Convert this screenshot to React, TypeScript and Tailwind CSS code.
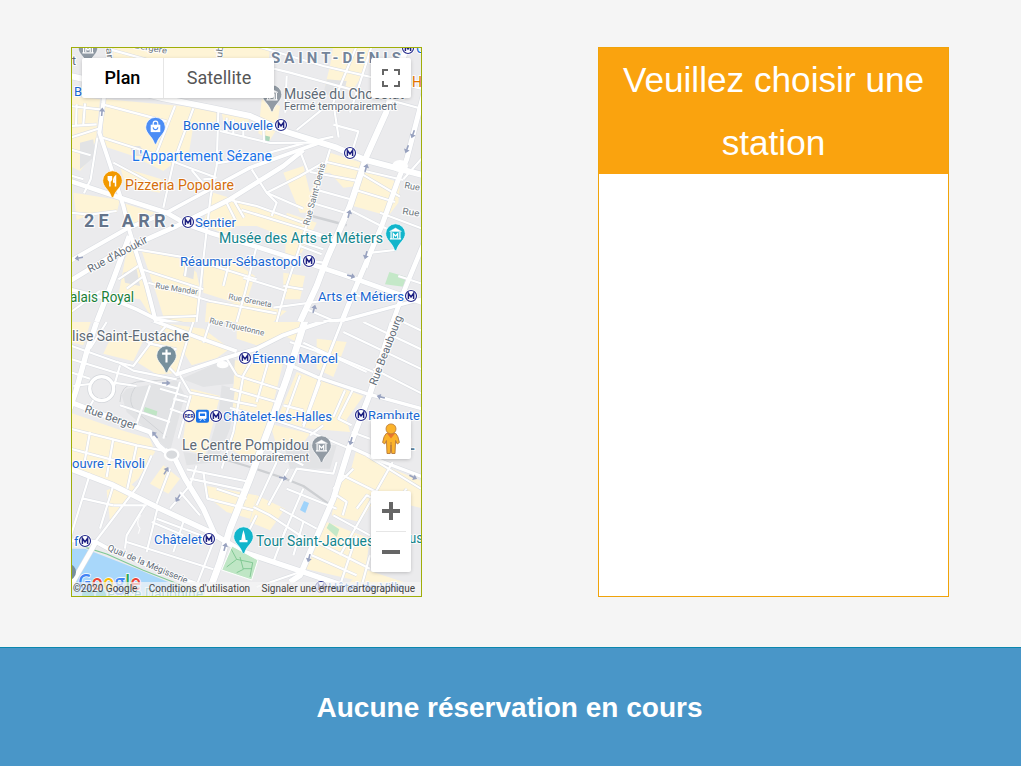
import React from "react";

const BLUE = "#1967d2";
const TEAL = "#12858d";
const GREY = "#5f6b76";

type Tile = {
  id: string;
  y: number;
  cream: string[];
  patches: string[];
  minor: string[];
  main: { d: string; w: number }[];
};

// Each tile is drawn on a grid three times finer than the page.
const tiles: Tile[] = [
  {
    id: "north",
    y: 46,
    cream: [
      "110,160 440,190 440,225 370,240 355,330 312,350 280,375 230,350 190,330 100,300 98,180",
      "0,150 90,160 78,280 50,350 30,375 0,360",
      "130,5 600,5 595,60 130,60",
      "790,0 900,0 875,90 850,130 765,120 780,60",
      "575,160 630,180 620,250 600,282 565,262",
      "10,440 150,462 140,500 60,505 20,522",
      "155,470 255,500 185,540",
      "150,362 275,400 270,440 190,425 165,410",
      "430,440 560,480 640,505 700,540 690,590 560,540 500,540 460,565 400,530",
      "640,380 700,360 720,440 780,320 875,350 862,420 820,425 780,380 755,380 720,500 690,500",
      "868,370 990,410 985,470 955,510 850,480",
      "650,500 740,530 695,620 645,640",
      "190,575 222,680 240,760 250,822 210,760 145,750 165,640",
      "215,615 340,640 380,680 390,730 375,828 285,828 258,740",
      "400,640 480,640 555,690 525,780 400,740",
      "640,680 705,690 690,760 640,760",
      "410,770 520,770 650,795 610,828 405,828",
      "455,200 540,215 530,240 460,225",
    ],
    patches: [
      "30,290 70,280 75,330 30,370",
      "180,300 210,300 230,330 190,330",
      "345,650 375,655 370,700 340,690",
      "160,680 200,670 210,720 165,710",
      "770,100 830,105 820,150 760,145",
    ],
    minor: [
      "M0 180 90 190M0 240 80 235M0 275 85 248M20 175 18 240M45 172 40 235M0 310 62 328M82 275 62 400 42 442M0 388 40 400",
      "M100 176 290 226M98 275 240 320 370 370 440 395M315 180 260 320M370 187 310 350 280 485M445 195 440 360 422 450 400 640 380 828",
      "M130 350 280 430M365 372 405 420M400 400 436 398M440 352 540 336 700 292 790 272M450 255 600 291 740 290M470 215V258M490 220V262M520 225V272M580 235 582 290",
      "M120 10 300 60M440 0 452 50M528 48 660 80 1062 190M560 0 760 60 1062 130M860 0 790 170 806 275M905 0 870 110 840 200M757 190 680 252M790 236 865 256 850 305M650 90 646 200",
      "M690 315 715 380M545 370 590 440 700 488M590 440 690 390 760 350M780 310 740 440 690 600 650 720 620 828",
      "M770 348 1000 402M720 378 870 406M735 430 850 462M730 472 840 505M715 560 790 582",
      "M480 462 560 480 700 530M515 492 640 530 770 570M490 460 522 515M470 470 496 522M590 440 620 470 605 510",
      "M868 380 990 452M850 430 975 468M835 490 950 548M700 590 760 610M690 600 755 625",
      "M0 500 60 506 140 495M200 610 350 635 400 650M352 640 345 690M215 670 400 730M145 700 205 660M170 728 222 690M235 710 420 765 620 802",
      "M560 600 525 740 500 828M400 650 560 700M520 695 650 735M610 785 780 762M0 800 90 735M255 815 380 810M480 640 460 720",
      "M690 640 760 650M890 665 905 620 975 612M930 500 1062 550M1000 400 1062 330M640 720 700 730",
      "M985 690 1062 715M850 745 900 760M710 790 800 828",
    ],
    main: [
      { d: "M118 0 100 170 88 260 128 380 160 480 180 560 230 720 258 828", w: 12 },
      { d: "M0 90 100 112 280 157 420 185 540 210 640 255 800 305 880 340 1062 388", w: 18 },
      { d: "M0 405 150 455 290 500 350 535 420 560 560 602 740 660 860 700 1062 772", w: 14 },
      { d: "M290 500 360 462 540 365 760 286", w: 11 },
      { d: "M0 705 140 620 320 540 480 460 640 360 700 312", w: 14 },
      { d: "M0 645 170 548 290 500", w: 12 },
      { d: "M178 570 130 700 80 828", w: 16 },
      { d: "M1010 0 948 200 890 330 840 480 770 640 740 720 690 828", w: 18 },
      { d: "M1062 140 1010 340 985 400 935 540 880 670 850 740 815 828", w: 15 },
      { d: "M1062 590 1000 740 968 828", w: 14 },
      { d: "M760 828 830 820 1062 757", w: 10 },
      { d: "M0 730 140 765 200 790 260 820 420 850", w: 11 },
    ],
  },
  {
    id: "south",
    y: 322,
    cream: [
      "200,120 262,40 340,70 322,152 262,158",
      "130,30 225,45 190,118 100,95",
      "260,0 400,20 480,80 440,108 365,130 340,90",
      "490,115 640,120 598,292 480,262 492,180",
      "362,200 450,222 405,400 335,380",
      "0,0 62,0 40,70 0,60",
      "0,272 140,320 240,350 255,390 205,470 170,500 90,470 0,425",
      "175,480 200,500 150,560 120,600 110,505",
      "280,430 330,470 295,515 240,485",
      "680,150 880,222 830,292 840,330 720,320 620,295",
      "740,50 830,60 790,165 740,140",
      "500,280 590,300 560,400 530,410 480,380",
      "600,305 720,335 700,362 620,372",
      "400,490 560,520 540,590 470,570 420,530",
      "560,520 645,560 600,625 540,600",
      "860,380 940,430 1062,480 1062,560 900,520 830,490",
      "810,450 930,510 870,600 785,580",
      "770,600 900,650 880,780 705,740 742,660",
      "880,740 1000,780 1000,828 820,800",
      "500,0 700,0 680,60 640,40 560,70 500,50",
    ],
    patches: [
      "335,170 470,110 495,112 490,185 440,190 400,195",
      "455,190 495,200 480,320 440,420 350,430 340,390 410,400 445,280",
      "170,200 320,175 345,220 310,350 300,390 240,330 170,270 155,220",
      "640,360 800,370 780,440 660,440",
    ],
    minor: [
      "M0 70 140 120 190 132 240 65 290 10M140 118 190 146 320 172M0 110 130 150 325 200M240 65 190 35M240 65 320 82M60 80 110 0",
      "M10 192 60 186M130 182 200 192M70 235 50 270M270 108 320 160 350 60 370 0M420 0 400 62M0 150 60 170M150 130 130 200",
      "M330 160 360 212 560 252M330 180 280 350M362 220 325 350M150 250 300 300M240 190 200 305M270 200 355 225M310 230 350 240M300 260 342 275",
      "M560 90 520 160 490 330 455 440M500 160 630 202M480 200 620 240M480 258 600 290M600 100 560 240M470 110 500 160",
      "M690 160 640 300M750 180 700 315M850 200 805 290 845 310M825 205 790 285M640 250 700 265M660 60 790 105 740 90M700 62 890 150",
      "M820 30 1062 145M880 0 1062 86M910 140 1062 218M1000 0 1062 30M790 100 910 150M600 290 720 330 840 380",
      "M0 320 200 370 275 385M0 380 190 430M60 330 40 440M130 350 110 465M200 370 172 500M300 440 260 545M60 455 0 650M130 490 90 620M40 530 130 550",
      "M245 400 205 490 75 660M225 550 170 640 165 680M130 550 230 550M262 560 230 690M330 510 390 580M360 490 300 560M245 600 340 640M170 660 430 742M340 600 310 690M430 660 380 790M260 590 420 650",
      "M350 442 540 480M360 470 525 505M400 450 412 530 550 565M440 500 530 530M380 430 360 490M620 420 560 550M655 440 595 550M630 560 740 620M700 500 640 640",
      "M550 555 600 580 720 660M650 500 800 560M648 620 610 720M560 795 690 750M560 580 530 640M700 600 670 700M545 360 640 400 700 430",
      "M818 460 930 515M800 520 830 540 818 580M790 580 900 640M740 660 900 740M725 700 860 760M968 420 810 700M890 400 1053 500M860 640 810 790M900 700 870 810M1010 500 960 560M850 440 790 500M860 560 890 520 920 535",
      "M660 480 680 440 790 455 800 420M845 330 900 350M720 340 760 310M650 420 600 400",
    ],
    main: [
      { d: "M80 0 50 90 20 200 0 260", w: 16 },
      { d: "M0 240 130 290 240 330 265 370 310 410", w: 15 },
      { d: "M285 385 310 400 345 470 400 560 440 650", w: 16 },
      { d: "M320 157 470 107 560 80 640 40 720 12 780 -8", w: 12 },
      { d: "M710 -20 650 170 600 310 540 470 480 620 450 720 410 828", w: 20 },
      { d: "M815 0 760 140 700 310", w: 8 },
      { d: "M968 0 900 215 840 370 790 530 720 690 690 760 660 780", w: 17 },
      { d: "M240 -8 380 45 500 88", w: 11 },
      { d: "M640 120 740 165 890 215 1062 262", w: 10 },
      { d: "M0 440 130 490 270 560 420 630 520 690 700 750 860 805", w: 16 },
      { d: "M840 375 940 420 1062 466", w: 10 },
      { d: "M0 655 78 660 115 680 250 738 390 790 480 828", w: 12 },
      { d: "M78 660 0 795", w: 14 },
    ],
  },
];

type MapLabel = {
  x: number;
  y: number;
  w: number;
  s: number;
  c: string;
  t: string;
  r?: number;
  b?: boolean;
};

const labels: MapLabel[] = [
  { x: 271, y: 62.5, w: 130, s: 15, c: "#74849a", t: "SAINT-DENIS", b: true },
  { x: 84, y: 227, w: 91, s: 18, c: "#64748b", t: "2E ARR.", b: true },
  { x: 284, y: 99, w: 120, s: 14, c: GREY, t: "Musée du Chocolat" },
  { x: 284, y: 109.5, w: 113, s: 11.2, c: GREY, t: "Fermé temporairement" },
  { x: 183, y: 130, w: 90, s: 13, c: BLUE, t: "Bonne Nouvelle" },
  { x: 132, y: 161, w: 140, s: 14, c: "#1a73e8", t: "L'Appartement Sézane" },
  { x: 125, y: 190, w: 109, s: 14, c: "#d56e0c", t: "Pizzeria Popolare" },
  { x: 195, y: 227, w: 41, s: 13, c: BLUE, t: "Sentier" },
  { x: 219, y: 243, w: 164, s: 14.2, c: TEAL, t: "Musée des Arts et Métiers" },
  { x: 180, y: 266, w: 121, s: 13.2, c: BLUE, t: "Réaumur-Sébastopol" },
  { x: 318, y: 301, w: 86, s: 13.2, c: BLUE, t: "Arts et Métiers" },
  { x: 70, y: 302, w: 64, s: 14, c: "#188038", t: "alais Royal" },
  { x: 72, y: 341, w: 117, s: 14, c: GREY, t: "lise Saint-Eustache" },
  { x: 252, y: 363, w: 86, s: 13, c: BLUE, t: "Étienne Marcel" },
  { x: 223, y: 421, w: 109, s: 13.2, c: BLUE, t: "Châtelet-les-Halles" },
  { x: 368, y: 420, w: 52, s: 13.2, c: BLUE, t: "Rambute" },
  { x: 182, y: 450, w: 127, s: 14, c: GREY, t: "Le Centre Pompidou" },
  { x: 197, y: 461, w: 112, s: 11.2, c: GREY, t: "Fermé temporairement" },
  { x: 72, y: 468, w: 73, s: 13, c: BLUE, t: "ouvre - Rivoli" },
  { x: 154, y: 544, w: 48, s: 13, c: BLUE, t: "Châtelet" },
  { x: 256, y: 546, w: 118, s: 14, c: TEAL, t: "Tour Saint-Jacques" },
  { x: 409, y: 543, w: 14, s: 14, c: TEAL, t: "us" },
  { x: 74, y: 546, w: 4.5, s: 13, c: BLUE, t: "f" },
  { x: 412, y: 87, w: 10, s: 14, c: "#e37400", t: "H" },
  { x: 416, y: 53, w: 9, s: 13, c: BLUE, t: "C" },
  { x: 74, y: 95.5, w: 8, s: 13, c: BLUE, t: "B" },
  { x: 72, y: 65, w: 4, s: 12, c: GREY, t: "t" },
  { x: 328, y: 592, w: 76, s: 13, c: BLUE, t: "Hôtel de Ville" },
  { x: 107, y: 599, w: 96, s: 14, c: "#2b98a5", t: "Place Dauphine" },
  { x: 407, y: 450, w: 22, s: 14, c: "#5e8099", t: "LE", b: true },
  { x: 90, y: 273, w: 66, s: 11, c: GREY, t: "Rue d'Aboukir", r: -28 },
  { x: 84, y: 412, w: 54, s: 11, c: GREY, t: "Rue Berger", r: 19 },
  { x: 376, y: 386, w: 74, s: 11, c: GREY, t: "Rue Beaubourg", r: -69 },
  { x: 309, y: 226, w: 64, s: 9, c: "#707981", t: "Rue Saint-Denis", r: -75 },
  { x: 155, y: 288, w: 43, s: 8, c: "#707981", t: "Rue Mandar", r: 9 },
  { x: 228, y: 299, w: 44, s: 8, c: "#707981", t: "Rue Greneta", r: 11 },
  { x: 209, y: 323, w: 56, s: 8, c: "#707981", t: "Rue Tiquetonne", r: 13 },
  { x: 107, y: 550, w: 86, s: 9, c: GREY, t: "Quai de la Mégisserie", r: 23 },
  { x: 404, y: 188, w: 26, s: 9, c: "#707981", t: "Rue M", r: 10 },
  { x: 402, y: 214, w: 26, s: 9, c: "#707981", t: "Rue R", r: 8 },
  { x: 134, y: 48, w: 33, s: 8.5, c: "#707981", t: "Bergère", r: 10 },
  { x: 106, y: 48, w: 11, s: 9, c: "#707981", t: "ar", r: 84 },
  { x: 222, y: 58, w: 12, s: 9, c: "#707981", t: "ub", r: -84 },
];

const metros = [
  [281, 125],
  [350, 153],
  [188, 222],
  [309, 261],
  [411, 296],
  [245, 358],
  [216, 416],
  [361, 415],
  [209, 539],
  [85, 541],
  [408, 48],
  [321, 587],
];

const arrows = [
  [102, 112, -85], [79, 258, 170], [366, 168, -75], [413, 134, 110], [407, 149, 110],
  [349, 214, -75], [366, 255, 105], [351, 276, 15], [314, 309, -75], [166, 383, 0],
  [155, 435, 230], [381, 397, 195], [351, 441, 105], [166, 471, -60], [178, 498, 120],
  [283, 478, 10], [413, 477, 25], [225, 547, -75], [309, 558, 105],
];

function Metro({ x, y }: { x: number; y: number }) {
  return (
    <g transform={`translate(${x} ${y})`}>
      <circle r="6.8" fill="#fff" />
      <circle r="5.5" fill="#fff" stroke="#262c8c" strokeWidth="1.2" />
      <path d="M-2.6 3V-2.6L0 1 2.6-2.6V3" fill="none" stroke="#1c1f80" strokeWidth="1.5" />
    </g>
  );
}

function Pin({ x, y, color, children }: { x: number; y: number; color: string; children: React.ReactNode }) {
  return (
    <g transform={`translate(${x} ${y})`}>
      <path
        d="M0-10.2A9.8 9.8 0 0 1 9.8-.4C9.8 5.8 3.6 8.4 1.2 15.6Q0 18-1.2 15.6C-3.6 8.4-9.8 5.8-9.8-.4A9.8 9.8 0 0 1 0-10.2Z"
        fill={color}
        stroke="#fff"
        strokeWidth=".7"
      />
      {children}
    </g>
  );
}

function MuseumGlyph() {
  return (
    <g fill="none" stroke="#fff" strokeWidth="1.2">
      <path d="M-6-2.6 0-6 6-2.6Z" fill="#fff" strokeWidth=".4" />
      <path d="M-4.4-2V4.6M4.4-2V4.6M-5.6 4.8H5.6M-2.2 4V-.4L0 2 2.2-.4V4" />
    </g>
  );
}

function StreetTile({ tile }: { tile: Tile }) {
  return (
    <g transform={`translate(70 ${tile.y}) scale(.33333)`}>
      <clipPath id={tile.id}>
        <rect width="1062" height="828.5" />
      </clipPath>
      <g clipPath={`url(#${tile.id})`} fill="none" strokeLinejoin="round">
        {tile.cream.map((p) => (
          <polygon key={p} points={p} fill="#fef4d6" />
        ))}
        {tile.patches.map((p) => (
          <polygon key={p} points={p} fill="#e2e3e5" />
        ))}
        {tile.id === "south" && (
          <>
            <path d="M0 680H45L200 740 330 795 400 828H0Z" fill="#a8d7fa" />
            <path d="M40 674 110 696 220 745 410 820" stroke="#81c995" strokeWidth="3.5" />
            <path d="M225 255 262 268 258 288 219 276Z" fill="#c0e5c5" />
            <path d="M770 618 778 602 808 622 800 645Z" fill="#c4e8c8" />
            <path d="M702 537 717 543 706 573 690 564Z" fill="#9fd3fb" />
            <path d="M150 240Q150 190 200 180L330 170M210 280Q160 240 200 190M200 270 290 345" stroke="#d2d4d7" strokeWidth="3" />
            <path d="M440 405 540 435 640 468 700 492 775 545" stroke="#cdcfd2" strokeWidth="7" />
          </>
        )}
        {tile.id === "north" && (
          <>
            <path d="M958 678 1008 692 1000 722 945 715Z" fill="#c4e8c8" />
            <path d="M582 268 600 272 598 286 582 286Z" fill="#a8d5b8" />
            <path d="M725 510 830 538" stroke="#cfd1d4" strokeWidth="8" />
          </>
        )}
        {tile.minor.map((d) => (
          <path key={d} d={d} stroke="#dadde2" strokeWidth="9.5" />
        ))}
        {tile.id === "south" && <circle cx="95" cy="200" r="36" stroke="#d3d6db" strokeWidth="14" />}
        {tile.main.map((r) => (
          <path key={r.d} d={r.d} stroke="#dadde2" strokeWidth={r.w + 3.5} />
        ))}
        {tile.minor.map((d) => (
          <path key={d} d={d} stroke="#fff" strokeWidth="6.5" />
        ))}
        {tile.main.map((r) => (
          <path key={r.d} d={r.d} stroke="#fff" strokeWidth={r.w} />
        ))}
        {tile.id === "south" && (
          <>
            <circle cx="95" cy="200" r="36" stroke="#fff" strokeWidth="10" />
            <ellipse cx="458" cy="128" rx="18" ry="11" fill="#fff" />
            <ellipse cx="305" cy="398" rx="20" ry="16" fill="#d8dadd" stroke="#fff" strokeWidth="7" />
            <path d="M486 672 564 714 545 774 455 744Z" fill="#bfe6c5" stroke="#fff" strokeWidth="3" />
            <path d="M484 682 500 712 470 735M500 712 548 722 540 765M510 705 520 742 500 752M520 740 545 740" stroke="#78c48c" strokeWidth="2.6" />
            <path d="M212 580Q195 600 210 620L205 635" stroke="#fff" strokeWidth="3" />
          </>
        )}
        {tile.id === "north" && <ellipse cx="990" cy="360" rx="24" ry="18" fill="#fff" />}
      </g>
    </g>
  );
}

function StreetMap() {
  return (
    <svg className="block h-full w-full" viewBox="72 48 349 548" fontFamily="Roboto, sans-serif">
      <rect x="72" y="48" width="349" height="548" fill="#ebebed" />
      {tiles.map((tile) => (
        <StreetTile key={tile.id} tile={tile} />
      ))}
      {arrows.map(([x, y, a]) => (
        <path key={`${x}-${y}`} d="M-4-.8H.5V-3L4.5 0 .5 3V.8H-4Z" fill="#98a2bf" transform={`translate(${x} ${y}) rotate(${a})`} />
      ))}

      <Pin x={88} y={48} color="#8f99a3"><MuseumGlyph /></Pin>
      <Pin x={272} y={95} color="#929ba4"><MuseumGlyph /></Pin>
      <Pin x={155.5} y={127.5} color="#4c8df5">
        <path d="M-4.8-2.8H4.8V4.6H-4.8Z" fill="#fff" />
        <path d="M-2.3-2.5V-4A2.3 2.3 0 0 1 2.3-4V-2.5" fill="none" stroke="#fff" strokeWidth="1.2" />
        <path d="M-2.3-.2A2.3 2.3 0 0 0 2.3-.2" fill="none" stroke="#4c8df5" strokeWidth="1.1" />
      </Pin>
      <Pin x={112.5} y={181} color="#f29900">
        <path d="M-2.6 0V5.5M3 5.5V-4.6Q1 -3 1.2 1H3" fill="none" stroke="#fff" strokeWidth="1.5" />
        <path d="M-4.9-5H-.3V-1.5Q-.8.8-2.6.8-4.4.8-4.9-1.5Z" fill="#fff" />
      </Pin>
      <Pin x={395.5} y={234} color="#12b5cb"><MuseumGlyph /></Pin>
      <Pin x={166.5} y={356} color="#78909c">
        <path d="M0-6.5V6.5M-4.4-2.4H4.4" stroke="#fff" strokeWidth="2.1" />
      </Pin>
      <Pin x={321.5} y={446} color="#929ba4"><MuseumGlyph /></Pin>
      <Pin x={243.5} y={537} color="#12b5cb">
        <path d="M0-7 1.4-2 2.2 3H4V5.2H-4V3H-2.2L-1.4-2Z" fill="#fff" />
      </Pin>
      <circle cx="68" cy="572" r="8" fill="#78909c" />
      <circle cx="88" cy="595" r="6" fill="#30afc0" />
      <circle cx="101" cy="595" r="5" fill="#30afc0" />

      {labels.map((l) => (
        <text
          key={`${l.t}-${l.x}-${l.y}`}
          transform={`translate(${l.x} ${l.y}) rotate(${l.r ?? 0})`}
          fontSize={l.s}
          fontWeight={l.b ? 700 : 400}
          fill={l.c}
          stroke="#fff"
          strokeWidth="2.2"
          strokeOpacity=".9"
          strokeLinejoin="round"
          paintOrder="stroke"
          textLength={l.w}
          lengthAdjust={l.b ? "spacing" : "spacingAndGlyphs"}
        >
          {l.t}
        </text>
      ))}
      {metros.map(([x, y]) => (
        <Metro key={`${x}-${y}`} x={x} y={y} />
      ))}
      <circle cx="189" cy="416" r="5.6" fill="#fff" stroke="#343a96" strokeWidth="1.1" />
      <text x="189" y="418" fontSize="5" fontWeight="700" fill="#262c8c" textAnchor="middle">RER</text>
      <rect x="196" y="409.8" width="13" height="13" rx="2" fill="#1a73e8" />
      <path d="M199 412.3H206V418.3H199ZM200 420.8 201.5 419M205 420.8 203.5 419" fill="#fff" stroke="#fff" />
      <path d="M200 413.5H205V416H200Z" fill="#1a73e8" />

      <text
        x="78"
        y="590"
        fontSize="22"
        fontFamily="'Open Sans', sans-serif"
        fontWeight="600"
        textLength="63"
        lengthAdjust="spacingAndGlyphs"
        stroke="#fff"
        strokeWidth="1.5"
        paintOrder="stroke"
      >
        <tspan fill="#4285f4">G</tspan>
        <tspan fill="#ea4335">o</tspan>
        <tspan fill="#fbbc04">o</tspan>
        <tspan fill="#4285f4">g</tspan>
        <tspan fill="#34a853">l</tspan>
        <tspan fill="#ea4335">e</tspan>
      </text>
    </svg>
  );
}

function Pegman() {
  return (
    <svg className="h-8 w-5" viewBox="0 0 20 32">
      <path
        d="M5.2 10.5Q10 8.6 14.8 10.5Q17.2 12.5 18.4 19.5L16.2 21 14.6 17.5 14 30.5H10.8L10 22 9.2 30.5H6L5.4 17.5 3.8 21 1.6 19.5Q2.8 12.5 5.2 10.5Z"
        fill="#fbb32b"
        stroke="#b8793a"
        strokeWidth=".9"
      />
      <path d="M6 10.5H14L10 15.6Z" fill="#e8742c" />
      <circle cx="10" cy="5.9" r="5" fill="#fbb32b" stroke="#b8793a" strokeWidth=".8" />
      <path d="M10 19V30" stroke="#b8793a" strokeWidth=".9" />
    </svg>
  );
}

function MapPanel() {
  return (
    <section className="relative h-[550px] w-[351px] overflow-hidden border border-[#9fae08] font-['Roboto',sans-serif]">
      <StreetMap />
      <div className="absolute top-[10px] left-[10px] flex h-10 w-48 rounded-xs bg-white text-[18px] shadow-[0_1px_4px_-1px_rgba(0,0,0,0.3)]">
        <button className="w-[82px] border-r border-[#e6e6e6] pb-0.5 font-medium text-black">Plan</button>
        <button className="flex-1 pb-0.5 text-[#565656]">Satellite</button>
      </div>
      <button className="absolute top-[10px] right-[10px] flex size-10 items-center justify-center rounded-xs bg-white shadow-[0_1px_4px_-1px_rgba(0,0,0,0.3)]">
        <svg className="size-[18px]" viewBox="0 0 18 18" fill="none" stroke="#666" strokeWidth="2">
          <path d="M1 6V1H6M12 1H17V6M17 12V17H12M6 17H1V12" />
        </svg>
      </button>
      <button className="absolute top-[371px] right-[10px] flex size-10 items-center justify-center rounded-xs bg-white shadow-[0_1px_4px_-1px_rgba(0,0,0,0.3)]">
        <Pegman />
      </button>
      <div className="absolute top-[443px] right-[10px] flex h-[81px] w-10 flex-col items-center rounded-xs bg-white shadow-[0_1px_4px_-1px_rgba(0,0,0,0.3)]">
        <button className="flex h-10 items-center">
          <svg className="size-[18px]" viewBox="0 0 18 18" fill="#666">
            <path d="M7 0H11V7H18V11H11V18H7V11H0V7H7Z" />
          </svg>
        </button>
        <div className="h-px w-[30px] bg-[#e6e6e6]" />
        <button className="flex h-10 items-center">
          <svg className="size-[18px]" viewBox="0 0 18 18" fill="#666">
            <path d="M0 7H18V11H0Z" />
          </svg>
        </button>
      </div>
      <div className="absolute right-0 bottom-0 left-0 flex h-[14px] items-center justify-between bg-[#f5f5f5]/70 pr-1.5 pb-0.5 pl-px text-[10px] whitespace-nowrap text-[#444]">
        <span>©2020 Google</span>
        <span>Conditions d'utilisation</span>
        <span>Signaler une erreur cartographique</span>
      </div>
    </section>
  );
}

export default function App() {
  return (
    <div className="flex h-[766px] flex-col bg-[#f5f5f5] font-['Liberation_Sans',Arial,sans-serif]">
      <main className="flex h-[647px] items-start justify-between pt-[47px] pr-[72px] pl-[71px]">
        <MapPanel />
        <section className="h-[550px] w-[351px] border border-[#f0a30a] bg-white">
          <h2 className="bg-[#faa30e] px-4 text-center text-[35.2px] leading-[63px] text-white">
            Veuillez choisir une station
          </h2>
        </section>
      </main>
      <footer className="flex flex-1 items-center justify-center border-t border-[#0b87ae] bg-[#4996c8] pt-[2px] pr-[2px] text-[28px] font-bold text-white">
        <p>Aucune réservation en cours</p>
      </footer>
    </div>
  );
}
